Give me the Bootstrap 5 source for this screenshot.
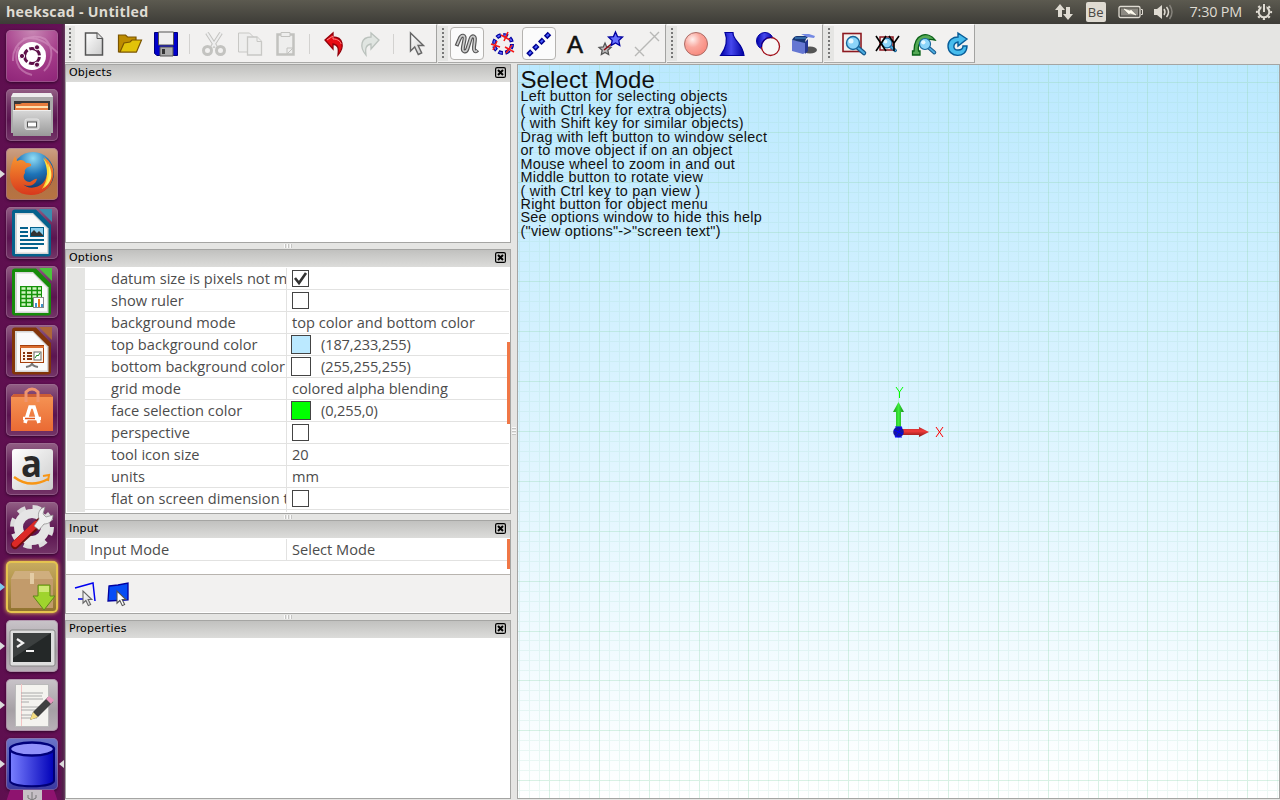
<!DOCTYPE html>
<html lang="en">
<head>
<meta charset="utf-8">
<title>heekscad - Untitled</title>
<link href="https://cdn.jsdelivr.net/npm/bootstrap@5.3.0/dist/css/bootstrap.min.css" rel="stylesheet">
<style>
body{width:1280px;height:800px;overflow:hidden;background:#e5e5e3;font-family:"Open Sans","Noto Sans",sans-serif;font-size:14.6px;color:#4c4c4c;line-height:22px}
svg{display:block;flex:none}
.topbar{height:24px;background:linear-gradient(#5c5a50,#3d3c37);color:#dfdbd2;line-height:24px}
.app-title{font-weight:700;font-size:14.2px;letter-spacing:.28px;padding-left:6px}
.clock{font-size:14.4px;letter-spacing:-.2px}
.kbd-ind{width:20px;height:20px;background:#dfdbd2;color:#4a4843;border-radius:2px;font-size:13px;line-height:20px}
.launcher{width:65px;height:776px;background:linear-gradient(90deg,#5e0f4f,#651056 92%,#4f2147 97%,#6c3c64);padding:6px 0 0 6px;gap:7px;overflow:hidden}
.tile{width:52px;height:52px;border-radius:5px;background:linear-gradient(#936085,#6b2a60 35%,#5b1450 60%,#743568);box-shadow:inset 0 0 0 1px #a3759988,0 1px 3px #30062a;flex:none;position:relative}
.tile.ub{background:radial-gradient(circle at 50% 0,#c988b5,#a43b89 55%,#8e2478)}
.tile.ff{background:linear-gradient(#cda184,#b07046 60%,#b77442)}
.tile.pk{background:linear-gradient(#c9ad61,#8f712e);box-shadow:inset 0 0 0 2px #e5c34f,0 0 4px #f5cc50}
.tile.gr{background:linear-gradient(#c9c4c9,#a6a0a5 60%,#b9b1b8)}
.tile.bl{background:linear-gradient(#6a74c9,#3b3aa0)}
.tile svg{width:52px;height:52px}
.run:before,.act:after{content:"";position:absolute;top:22px;border:4px solid transparent}
.run:before{left:-6px;border-left:5px solid #dcdcdc;border-right:0}
.run.pk:before{border-left-color:#7fc9ee}
.act:after{right:-6px;border-right:5px solid #dcdcdc;border-left:0}
.toolrow{height:40px}
.tb{height:39px;background:#f2f1f0;border-right:1px solid #a3a3a1;border-top:1px solid #fff;border-bottom:1px solid #a9a9a7;margin-right:1px}
.grip{width:10px;height:35px;background:#e5e5e3;margin-right:1px;flex:none}
.grip i{display:block;width:2px;height:31px;margin:2px 0 0 4px;background:repeating-linear-gradient(#777 0 2px,transparent 2px 4px)}
.cell{width:36px;height:34px;flex:none}
.tb4 .cell{width:35.5px}
.cell svg,.in-tools svg{width:24px;height:24px;overflow:visible}
.cell.on{background:#fbfbfb;border:1px solid #b5b3b0;border-radius:4px;width:34px;height:33px;margin:0 1px}
.vsep{width:12px;flex:none}.vsep i{display:block;width:1px;height:20px;background:#d3d2d0;margin-left:5px}
.side{width:446px;height:735px}
.dock{border:1px solid #a5a5a3;border-top:0;background:#fff;overflow:hidden;flex:none}
.dock-h{height:18px;background:linear-gradient(#c1c1bf,#dcdcda);border-top:1px solid #a5a5a3;font:11px/14px "DejaVu Sans",sans-serif;color:#000;padding:0 0 2px 3px;letter-spacing:.2px}
.dock-h svg{width:11px;height:11px;margin-right:4px}
.sash{height:7px;flex:none}
.sash i{display:block;width:9px;height:4px;background:repeating-linear-gradient(90deg,#fafafa 0 1px,#c5c5c3 1px 2px,#e5e5e3 2px 3px)}
.props{position:relative;overflow:hidden;padding:1px 1px 0 1px;background:#fff}
.prow{height:22px;flex:none;line-height:20px}
.gut{width:18px;background:#e5e5e3}
.lab{width:202px;border-right:1px solid #e2e2e1;border-bottom:1px solid #e2e2e1;padding-left:26px;overflow:hidden;white-space:nowrap;letter-spacing:.03px}
.val{border-bottom:1px solid #e2e2e1;padding-left:5px;white-space:nowrap}
.val>span{padding-bottom:1px}
.chk{width:17px;height:17px;border:1px solid #444;background:#fff}
.sw{width:20px;height:19px;border:1px solid #444;margin:0 10px 0 -1px}
.rgb{letter-spacing:-.13px}
.bar-pos{position:absolute;right:0;width:3px;background:#f07746}
.in-tools{height:38px;background:#f2f1f0;border-top:1px solid #b8b4af}
.vsash{width:6px;padding-top:363px}
.vsash i{display:block;width:4px;height:9px;margin-left:1px;background:repeating-linear-gradient(#fafafa 0 1px,#c5c5c3 1px 2px,#e5e5e3 2px 3px)}
.view{width:763px;height:735px;border:1px solid #a5a5a3;background:linear-gradient(#bbe9ff,#fff);position:relative;overflow:hidden}
.view>svg{position:absolute;left:0;top:0}
.help{position:absolute;left:2.5px;top:4px;color:#111;font:14.4px/13.45px "Liberation Sans",Arial,sans-serif;letter-spacing:.24px;white-space:nowrap}
.help b{display:block;font-weight:400;font-size:24px;line-height:21.4px;letter-spacing:.1px}
</style>
</head>
<body>
<svg width="0" height="0" class="position-absolute"><defs>
<linearGradient id="gw" x2="1" y2="1"><stop stop-color="#fff"/><stop offset="1" stop-color="#ccc"/></linearGradient>
<linearGradient id="gb" x2="1"><stop stop-color="#7a80ff"/><stop offset="1" stop-color="#0000b8"/></linearGradient>
<linearGradient id="gblue" x2="1"><stop stop-color="#0000a8"/><stop offset=".45" stop-color="#4648ee"/><stop offset="1" stop-color="#0000a0"/></linearGradient>
<linearGradient id="go" y2="1" x2="0"><stop stop-color="#f59555"/><stop offset="1" stop-color="#ea6a34"/></linearGradient>
<radialGradient id="gs" cx=".35" cy=".3" r=".7"><stop stop-color="#fff0ee"/><stop offset=".5" stop-color="#faa79d"/><stop offset="1" stop-color="#f88c80"/></radialGradient>
<radialGradient id="gg" cx=".5" cy=".15" r=".85"><stop stop-color="#8fdcf5"/><stop offset=".45" stop-color="#1e74b8"/><stop offset="1" stop-color="#0b2555"/></radialGradient>
<linearGradient id="gf" y2="1" x2="0"><stop stop-color="#f79530"/><stop offset="1" stop-color="#d8381c"/></linearGradient>
<linearGradient id="gm" y2="1" x2="0"><stop stop-color="#d8d8d8"/><stop offset="1" stop-color="#999"/></linearGradient>
<g id="lens"><path d="M4 4l7 6" stroke="#16588a" stroke-width="4.5" stroke-linecap="round"/><path d="M4 4l7 6" stroke="#4cabdf" stroke-width="2.2" stroke-linecap="round"/><circle r="6.5" fill="#8cd5fa" stroke="#18679c" stroke-width="1.4"/><circle cx="-2" cy="-2" r="2.5" fill="#e5f7ff"/></g>
<path id="star" d="M0-7l2 4.600 5 .5-3.700 3.300 1 5L0 4l-4.300 2.400 1-5L-7-1.900l5-.5z"/>
<path id="ptr" d="M0 0v18l4.200-4 3.600 7.500 3.400-1.600-3.600-7.400H13z"/>
<g id="close"><rect x=".6" y=".6" width="9.800" height="9.800" rx="1.500" fill="none" stroke="#000" stroke-width="1.200"/><path d="M3 3l5 5M8 3l-5 5" stroke="#000" stroke-width="2"/></g>
<path id="doc" d="M9 2.500h21L45 18v28.500q0 3-3 3H9q-3 0-3-3V5.500q0-3 3-3z"/>
<g id="sheet"><path d="M9 6h18l15.500 15.500V47H9z" fill="#d5d5d5"/><path d="M11 7.500h16L41 22v23.500H11z" fill="#fafafa"/></g>
</defs></svg>

<header class="topbar d-flex align-items-center justify-content-between">
 <div class="app-title">heekscad - Untitled</div>
 <div class="d-flex align-items-center" style="padding-right:7px">
  <svg width="18" height="18" style="margin-right:13px" fill="#dfdbd2"><path d="M5 1l5 6H7v7H3V7H0zM13 17l5-6h-3V4h-4v7H8z"/></svg>
  <div class="kbd-ind text-center" style="margin-right:12px">Be</div>
  <svg width="26" height="14" style="margin-right:10px"><rect x="1" y="1.500" width="21" height="11" rx="1.500" fill="none" stroke="#dfdbd2" stroke-width="1.300"/><rect x="3" y="3.500" width="17" height="7" fill="#8d8a82"/><path d="M23 4.500h1.500v5H23" stroke="#dfdbd2" fill="none"/><path d="M6 4l6 2 1-1 5 5-6-2-1 1z" fill="#fffbee" stroke="#fffbee" stroke-width=".6"/></svg>
  <svg width="20" height="18" style="margin-right:16px" fill="none"><path d="M0 6h3l5-4v14l-5-4H0z" fill="#dfdbd2"/><path d="M10 6q2 3 0 6M12.500 4q4 5 0 10" stroke="#dfdbd2" stroke-width="1.500"/><path d="M15.500 2q5 7 0 14" stroke="#85827b" stroke-width="1.500"/></svg>
  <div class="clock" style="margin-right:13px">7:30 PM</div>
  <svg width="18" height="18" viewBox="-9 -9 18 18" fill="none" stroke="#dfdbd2"><circle r="5.300" stroke-width="2"/><circle r="7.100" stroke-width="2" stroke-dasharray="2.200 3.376" stroke-dashoffset="1.100"/><path d="M0-9V-2" stroke="#504e46" stroke-width="5"/><path d="M0-8V0" stroke-width="2"/></svg>
 </div>
</header>

<div class="d-flex">
<nav class="launcher d-flex flex-column">
 <div class="tile ub"><svg><path d="M7 31C6 11 26 2 39 9c10 9 7 25-1 32M26 45C9 41 8 26 13 17M17 9c18-5 31 11 35 14" fill="none" stroke="#dba0ca" stroke-opacity=".5" stroke-width="2"/><circle cx="26" cy="26" r="14" fill="#fff"/><circle cx="26" cy="26" r="7.500" fill="none" stroke="#5e1049" stroke-width="3" stroke-dasharray="13.700 2" stroke-dashoffset="-1"/><g fill="#5e1049" stroke="#fff"><circle cx="16" cy="26" r="2.600"/><circle cx="31" cy="17.300" r="2.600"/><circle cx="31" cy="34.700" r="2.600"/></g></svg></div>
 <div class="tile"><svg><path d="M5 8l2-4h38l2 4v36H5z" fill="#aaa"/><path d="M5 8l2-4h38l2 4z" fill="#eee"/><rect x="8" y="12" width="36" height="10" fill="#383838"/><path d="M9 15h5l2-1h26v8H9z" fill="#e87c3c"/><path d="M10 18h32" stroke="#ffe1b0" stroke-width="2"/><path d="M7 21h38v26H7z" fill="url(#gm)"/><path d="M7 21.500h38" stroke="#eee"/><rect x="19" y="30" width="14" height="10.500" rx="2" fill="#cdcdcd" stroke="#e6e6e6"/><rect x="21.500" y="33" width="9" height="5" fill="#fff" stroke="#555"/></svg></div>
 <div class="tile ff run"><svg><circle cx="27" cy="25" r="21" fill="url(#gg)"/><path d="M38 9c7 5 11 12 9 20-2 12-12 18-22 18C11 47 4 38 4 27c0-7 2-13 5-19l2 5c4-2 7-1 9 2 3 0 6 0 5 3-4 1-7 3-6 7-3 3-1 9 5 9 3-1 5-4 7-3-2 8-11 8-14 5 4 5 14 5 20-1 6-7 5-16 1-26z" fill="url(#gf)"/><path d="M37 10c11 11 8 25-1 31 6-9 7-20 1-31z" fill="#ffdd35"/><path d="M42 15c7 14 2 20-4 25 5-8 6-15 4-25z" fill="#fff36a"/></svg></div>
 <div class="tile"><svg><use href="#doc" fill="#04618c"/><use href="#sheet"/><path d="M33 2h13v13z" fill="#3b8cae"/><g stroke="#04618c" stroke-width="2"><path d="M14 21h8M14 25h8M14 29h8M14 33h24M14 37h24M14 41h18"/></g><rect x="24.500" y="20.500" width="13" height="9" fill="#8ccfed" stroke="#04618c"/><path d="M25 29v-3l3-3 3 3 2-2 4 4v1z" fill="#333"/></svg></div>
 <div class="tile"><svg><use href="#doc" fill="#168b0a"/><use href="#sheet"/><path d="M33 2h13v13z" fill="#4bc43c"/><rect x="14" y="20" width="22" height="21" fill="#16930a"/><path d="M15.500 22.500h4m1.500 0h4m1.500 0h4m1.500 0h3M15.500 26.500h4m1.500 0h4m1.500 0h4m1.500 0h3M15.500 30.500h4m1.500 0h4m1.500 0h4m1.500 0h3M15.500 34.500h4m1.500 0h4M15.500 38.500h4m1.500 0h4" stroke="#cef5bf" stroke-width="2.400"/><rect x="27.500" y="31.500" width="10" height="10" fill="#fff" stroke="#888"/><path d="M29 37h2v4h-2zM35 38h2v3h-2z" fill="#4093ca"/><path d="M32 33h2v8h-2z" fill="#e97619"/></svg></div>
 <div class="tile"><svg><use href="#doc" fill="#823509"/><use href="#sheet"/><path d="M33 2h13v13z" fill="#ad6639"/><rect x="14.500" y="20.500" width="23" height="17" fill="#fff4e9" stroke="#a5400c"/><path d="M14 22h24" stroke="#d96c2d" stroke-width="2"/><path d="M17 28h2m2 0h5M17 31h2m2 0h5M17 34h2m2 0h5" stroke="#87330a" stroke-width="2"/><rect x="28" y="27" width="7" height="8" fill="#fff" stroke="#666"/><path d="M29 33l2-3 1 1 2-3" stroke="#198a25" fill="none"/><path d="M20 42q6-1 6-4 0 3 6 4" stroke="#777" stroke-width="2" fill="none"/></svg></div>
 <div class="tile"><svg><path d="M5 13l3-3h36l3 3v34H5z" fill="url(#go)"/><path d="M5 13l3-3h36l3 3z" fill="#cc5d35"/><path d="M20 18V8q6-6 12 0v10" stroke="#ef9570" stroke-width="3" fill="none"/><path d="M19 39l5-16h4l5 16M17 34.500h18" stroke="#fff" stroke-width="3.600" fill="none"/><path d="M19 34.500h10" stroke="#e2571c" stroke-width="1.500"/></svg></div>
 <div class="tile"><svg><rect x="6" y="6" width="41" height="41" rx="3" fill="url(#gw)"/><text x="15" y="34" style="font:bold 38px 'Open Sans',sans-serif" textLength="21" lengthAdjust="spacingAndGlyphs" fill="#292929">a</text><path d="M8 34q16 12 34 2" fill="none" stroke="#f79515" stroke-width="2.500"/><path d="M37 33l6-1-1 6" fill="none" stroke="#f79515" stroke-width="2"/></svg></div>
 <div class="tile"><svg><circle cx="26" cy="25" r="19" fill="none" stroke="#ddd" stroke-width="6" stroke-dasharray="8 6.920"/><circle cx="26" cy="25" r="13.500" fill="none" stroke="#e5e5e5" stroke-width="9"/><path d="M9 43L36 18" stroke="#6f0d0d" stroke-width="8" stroke-linecap="round"/><path d="M9 42L30 22" stroke="#dd2926" stroke-width="6" stroke-linecap="round"/><path d="M28 24l5-7c-2-6 1-11 6-12l-2 7 3 3 7-2c0 6-4 9-9 9l-5 6z" fill="#efefef" stroke="#888" stroke-width=".7"/></svg></div>
 <div class="tile pk run"><svg><path d="M9 10h34l4 8v29H5V18z" fill="#c29b6b"/><path d="M9 10h34l4 8H5z" fill="#cfae7e"/><path d="M24 12h4v11h-4z" fill="#e3cca5"/><path d="M32 24h12v11h5L38 49 27 35h5z" fill="#9fd42d" stroke="#60861a"/><path d="M33 25h10v6H33z" fill="#cee874"/></svg></div>
 <div class="tile gr run"><svg><rect x="4" y="10" width="45" height="36" rx="2" fill="#dedede" stroke="#888"/><rect x="7" y="13" width="38" height="29" fill="#242828"/><path d="M7 13h38L7 38z" fill="#3c4040"/><path d="M11 19l6 4-6 4M20 31h8" stroke="#f3f3f3" stroke-width="2.200" fill="none"/></svg></div>
 <div class="tile gr run"><svg><rect x="9.500" y="5.500" width="33" height="42" fill="#f4f3ef" stroke="#bbb"/><path d="M15.500 5v42" stroke="#f3c4c4"/><path d="M15 14h22M15 17h21M15 20h22M15 23h8M15 28h19M15 31h18M15 36h13M15 39h16" stroke="#aaa"/><path d="M24 41l3-8L42 18l5 5-15 15z" fill="#404141"/><path d="M24 41l3-8 5 5z" fill="#f4dd82"/><path d="M40 20l3-3 5 4-3 4z" fill="#e897be"/></svg></div>
 <div class="tile bl run act"><svg><path d="M4 11v32c2 7 42 7 44 0V11z" fill="url(#gb)" stroke="#000075" stroke-width="2"/><ellipse cx="26" cy="11" rx="22" ry="6.500" fill="#9091fa" stroke="#00007b" stroke-width="2.500"/></svg></div>
 <div class="tile" style="margin-top:-7px;z-index:1;background:none;box-shadow:none"><svg><path d="M4 0h44l4 12H0z" fill="#8e136f"/><path d="M17 0h19v12H17z" fill="#c6bfc5"/><path d="M26 2v10M22 5v3l4 2 4-2V5" stroke="#777" fill="none"/></svg></div>
</nav>

<main>
<div class="toolrow d-flex">
 <div class="tb d-flex align-items-center" style="width:372px">
  <div class="grip"><i></i></div>
  <div class="cell d-flex align-items-center justify-content-center"><svg><path d="M3.500 1H15l5.500 5.500V23h-17z" fill="url(#gw)" stroke="#555" stroke-width="1.500"/><path d="M15 1v5.500h5.500" fill="#ddd" stroke="#555"/></svg></div>
  <div class="cell d-flex align-items-center justify-content-center"><svg stroke="#7b5500" stroke-width="1.200"><path d="M.5 3h7l2 2H18v15H.5z" fill="#bd8c00"/><path d="M2 20l4-9 6-1 2-2h9.500l-5 12z" fill="#e2c30a"/></svg></div>
  <div class="cell d-flex align-items-center justify-content-center"><svg><path d="M.5.5h23v23H3l-2.500-2z" fill="#0000cb" stroke="#00007c"/><path d="M4.500 0h15v13h-15z" fill="#f0f0f0" stroke="#555"/><path d="M6 15h13v9H6z" fill="#aaa" stroke="#555"/><path d="M8 17h3v5H8z" fill="#333"/></svg></div>
  <div class="vsep"><i></i></div>
  <div class="cell d-flex align-items-center justify-content-center"><svg fill="none" stroke="#c3c3c0"><path d="M5 1l9 14M19 1l-9 14" stroke-width="4"/><path d="M5 1l9 14M19 1l-9 14" stroke="#eee" stroke-width="2"/><circle cx="5.500" cy="18.500" r="4" stroke-width="3"/><circle cx="18.500" cy="18.500" r="4" stroke-width="3"/></svg></div>
  <div class="cell d-flex align-items-center justify-content-center"><svg fill="#eeeeed" stroke="#c8c8c5"><path d="M.5 1h11l4 4v15H.5z"/><path d="M9.500 5H19l4.500 4.500V23h-14z" stroke-width="1.300"/><path d="M19 5v4.500h4.500"/></svg></div>
  <div class="cell d-flex align-items-center justify-content-center"><svg fill="#eeeeed" stroke="#c2c2bf"><path d="M3.500 2.500h16v20h-16z" stroke-width="2.500"/><path d="M7 .5h9v4H7z"/><path d="M13 22v-6h6z"/></svg></div>
  <div class="vsep"><i></i></div>
  <div class="cell d-flex align-items-center justify-content-center"><svg><path d="M3 8l8-7v4c10 0 12 10 5 18 1-7 0-10-5-11v5z" fill="#e90b13" stroke="#92000a" stroke-width="1.300"/><path d="M5 8l6-4v3c5 0 8 3 8 5" stroke="#ff8585" fill="none"/></svg></div>
  <div class="cell d-flex align-items-center justify-content-center"><svg><path d="M21 8l-8-7v4C3 5 1 15 8 23c-1-7 0-10 5-11v5z" fill="#e0e5e1" stroke="#bbc2bd" stroke-width="1.300"/></svg></div>
  <div class="vsep" style="width:11px"><i></i></div>
  <div class="cell d-flex align-items-center justify-content-center"><svg><use href="#ptr" x="5.500" y="1" fill="url(#gw)" stroke="#666" stroke-width="1.400"/></svg></div>
 </div>
 <div class="tb d-flex align-items-center" style="width:228px">
  <div class="grip"><i></i></div>
  <div class="cell on d-flex align-items-center justify-content-center"><svg fill="none"><path d="M1.500 14L4.500 7C6.500 2 10.500 3 9.500 7.500L8 15c-1 5 3 6 4.500 1.500L15.500 7c1.500-4.500 5-3 4.300 1.500L19 15c-.5 4 1.500 5.500 3.500 3" stroke="#555" stroke-width="4"/><path d="M2 13L4.500 7C6.500 2 10.500 3 9.500 7.500L8 15c-1 5 3 6 4.500 1.500L15.500 7c1.500-4.500 5-3 4.300 1.500L19 15c-.5 4 1.500 5.500 3 3.500" stroke="#ccc" stroke-width="1.700"/></svg></div>
  <div class="cell d-flex align-items-center justify-content-center"><svg fill="none"><circle cx="12" cy="12" r="9" stroke="#0000a0" stroke-width="4" stroke-dasharray="4.600 2.470"/><circle cx="12" cy="12" r="9" stroke="#5d68ff" stroke-width="1.600" stroke-dasharray="2.600 4.470" stroke-dashoffset="-1"/><path d="M10 3l9 5M17 0l-4 9M0 12l9 3M6 9l-4 9M14 15l9 5M21 13l-6 8" stroke="#f41a19" stroke-width="1.600"/></svg></div>
  <div class="cell on d-flex align-items-center justify-content-center"><svg><path d="M1 23L23 1" stroke="#00008e" stroke-width="5" stroke-dasharray="5.500 2.800"/><path d="M2 22L23 1" stroke="#4960ff" stroke-width="2" stroke-dasharray="3 5.300"/></svg></div>
  <div class="cell d-flex align-items-center justify-content-center"><svg><text x="4" y="21" textLength="16" lengthAdjust="spacingAndGlyphs" style="font:24px 'Liberation Sans',sans-serif" fill="#111" stroke="#111" stroke-width=".6">A</text></svg></div>
  <div class="cell d-flex align-items-center justify-content-center"><svg><use href="#star" transform="translate(6 17) scale(.85)" fill="#bbb" stroke="#555" stroke-width="1.500"/><path d="M5 18L16 9" stroke="#8b0912" stroke-width="1.600"/><use href="#star" x="16.500" y="7" fill="#6871ff" stroke="#0000a0" stroke-width="1.300"/></svg></div>
  <div class="cell d-flex align-items-center justify-content-center"><svg stroke="#b8b8b6" stroke-width="1.400"><path d="M4 20L20 4M0 15l9 9M0 24l9-9M15 0l9 9M15 9l9-9"/></svg></div>
 </div>
 <div class="tb d-flex align-items-center" style="width:156px">
  <div class="grip"><i></i></div>
  <div class="cell d-flex align-items-center justify-content-center"><svg><circle cx="12" cy="12" r="11.500" fill="url(#gs)" stroke="#ad6d67"/></svg></div>
  <div class="cell d-flex align-items-center justify-content-center"><svg><path d="M5 .5h8c0 9 9 9 11 23H.5C6 16 8 8 5 .5z" fill="url(#gblue)" stroke="#00009c" stroke-width="1.200"/></svg></div>
  <div class="cell d-flex align-items-center justify-content-center"><svg><circle cx="9" cy="9" r="8.500" fill="url(#gblue)" stroke="#0000a0"/><circle cx="14.500" cy="14.500" r="9" fill="#f7f6f6" stroke="#a00d17" stroke-width="1.300"/><path d="M5.500 15a9 9 0 0 1 10-9.500" stroke="#0000a0" fill="none" stroke-width="1.300"/></svg></div>
  <div class="cell d-flex align-items-center justify-content-center"><svg><ellipse cx="18" cy="18" rx="7" ry="3.500" fill="#555"/><path d="M0 8l13 2v11l-2 1-11-3z" fill="#6577d2"/><path d="M13 10l3-3v12l-3 3z" fill="#273793"/><path d="M0 8q2-4 5-4h14q-6 1-6 7z" fill="#183674"/><path d="M3 6h11" stroke="#4d9ad6"/><path d="M9 2h8l6 2-1 2-7-1z" fill="#7489e4"/></svg></div>
 </div>
 <div class="tb tb4 d-flex align-items-center" style="width:151px">
  <div class="grip"><i></i></div>
  <div class="cell d-flex align-items-center justify-content-center"><svg><rect x="2" y="1.500" width="18" height="18" fill="none" stroke="#8d1920" stroke-width="1.600"/><use href="#lens" x="12" y="11"/></svg></div>
  <div class="cell d-flex align-items-center justify-content-center"><svg style="margin-left:-2px"><rect x="5" y="5" width="13" height="13" fill="none" stroke="#8d1920" stroke-width="1.500"/><use href="#lens" transform="translate(12 11) scale(.75)"/><path d="M1 4l10 15M11 4L1 19M14 4l5 7 5-7M19 11v8" stroke="#000" stroke-width="1.600" fill="none"/></svg></div>
  <div class="cell d-flex align-items-center justify-content-center"><svg><path d="M.5 23h7.500v-4H6.500C5 10 12 6 23 8 16-1 2 1 2 19H.5z" fill="#55a955" stroke="#096117" stroke-width="1.300"/><use href="#lens" transform="translate(13 12) scale(.85)"/></svg></div>
  <div class="cell d-flex align-items-center justify-content-center"><svg><path d="M11 1l9 6-9 7v-4c-5 1-6 8 0 8 4 0 5-2 5-4h4c0 13-19 12-19 0C1 8 6 5 11 5z" fill="#47bced" stroke="#075c98" stroke-width="1.400"/></svg></div>
 </div>
</div>

<div class="d-flex">
<aside class="side d-flex flex-column">
 <section class="dock" style="height:179px"><div class="dock-h d-flex align-items-center justify-content-between"><span>Objects</span><svg><use href="#close"/></svg></div></section>
 <div class="sash d-flex justify-content-center align-items-center" style="height:6px"><i></i></div>
 <section class="dock" style="height:265px"><div class="dock-h d-flex align-items-center justify-content-between"><span>Options</span><svg><use href="#close"/></svg></div>
  <div class="props" id="options" style="height:245px"><div class="bar-pos" style="top:75px;height:82px"></div></div></section>
 <div class="sash d-flex justify-content-center align-items-center" style="height:6px"><i></i></div>
 <section class="dock" style="height:94px"><div class="dock-h d-flex align-items-center justify-content-between"><span>Input</span><svg><use href="#close"/></svg></div>
  <div class="props" style="height:36px"><div class="prow d-flex"><div class="gut"></div><div class="lab" style="padding-left:5px">Input Mode</div><div class="val flex-fill">Select Mode</div></div><div class="bar-pos" style="top:1px;height:30px"></div></div>
  <div class="in-tools d-flex align-items-center ps-2" style="gap:9px">
   <svg><path d="M1 6l18-5 2 18M4 17h8" fill="none" stroke="#0000f0" stroke-width="1.500"/><use href="#ptr" transform="translate(9 9) scale(.68)" fill="url(#gw)" stroke="#666" stroke-width="1.600"/></svg>
   <svg><path d="M2 4l9-1 10-2v17L1 19z" fill="#074df5" stroke="#0000a0" stroke-width="1.300"/><use href="#ptr" transform="translate(10 9) scale(.68)" fill="#fff" stroke="#555" stroke-width="1.600"/></svg>
  </div></section>
 <div class="sash d-flex justify-content-center align-items-center" style="height:6px"><i></i></div>
 <section class="dock" style="height:179px"><div class="dock-h d-flex align-items-center justify-content-between"><span>Properties</span><svg><use href="#close"/></svg></div></section>
</aside>
<div class="vsash"><i></i></div>
<section class="view">
 <svg width="761" height="734" id="grid" shape-rendering="crispEdges"></svg>
 <svg width="761" height="734" viewBox="518 65 761 734">
  <defs><linearGradient id="ax" x2="0" y2="1"><stop stop-color="#b92929"/><stop offset=".4" stop-color="#f23b3b"/><stop offset="1" stop-color="#851515"/></linearGradient><linearGradient id="ay"><stop stop-color="#169716"/><stop offset=".5" stop-color="#3bed3b"/><stop offset="1" stop-color="#158b15"/></linearGradient></defs>
  <path d="M898 429h21v-2l10 5-10 5v-2h-21z" fill="url(#ax)"/><path d="M896 432v-20h-3l5.500-10 5.500 10H901v20z" fill="url(#ay)"/><circle cx="898.500" cy="432" r="5.300" fill="#1515a0"/><path d="M895 427h7l-7 10h7M894 430l9 4" stroke="#0000ff" fill="none"/>
  <path d="M936 427l7 10M943 427l-7 10" stroke="#f00" stroke-width="1"/><path d="M896 387l3.500 5 3.500-5M899.500 392v6" stroke="#0f0" stroke-width="1" fill="none"/>
 </svg>
 <div class="help"><b>Select Mode</b>Left button for selecting objects<br>( with Ctrl key for extra objects)<br>( with Shift key for similar objects)<br>Drag with left button to window select<br>or to move object if on an object<br>Mouse wheel to zoom in and out<br>Middle button to rotate view<br>( with Ctrl key to pan view )<br>Right button for object menu<br>See options window to hide this help<br>("view options"-&gt;"screen text")</div>
</section>
</div>
</main>
</div>
<script src="https://cdn.jsdelivr.net/npm/bootstrap@5.3.0/dist/js/bootstrap.bundle.min.js"></script>
<script>
const box='<div class="chk"></div>',
 ticked='<div class="chk"><svg width="15" height="15"><path d="M2 7l4 5 7-10" fill="none" stroke="#333" stroke-width="2.600"/></svg></div>',
 word=t=>`<span>${t}</span>`,
 color=c=>`<div class="sw" style="background:rgb(${c})"></div><span class="rgb">(${c})</span>`;
const rows=[['datum size is pixels not mm',ticked],['show ruler',box],['background mode',word('top color and bottom color')],
 ['top background color',color('187,233,255')],['bottom background color',color('255,255,255')],['grid mode',word('colored alpha blending')],
 ['face selection color',color('0,255,0')],['perspective',box],['tool icon size',word('20')],['units',word('mm')],['flat on screen dimension text',box],['','']];
document.getElementById('options').insertAdjacentHTML('afterbegin',rows.map(([k,v])=>
 `<div class="prow d-flex"><div class="gut"></div><div class="lab">${k}</div><div class="val flex-fill d-flex align-items-center">${v}</div></div>`).join(''));
// Grid lines radiate from the origin; every fifth line is a major one.
const cx=380,cy=367,step=9.975;
let minor='',major='';
for(let i=-40;i<=40;i++){
 const x=Math.round(cx+i*step)+.5,y=Math.round(cy+i*step)-.5;
 const d=(x>0&&x<761?`M${x} 0V734`:'')+(y>0&&y<734?`M0 ${y}H761`:'');
 if(i%5)minor+=d;else major+=d;
}
document.getElementById('grid').innerHTML=`<path d="${minor}" stroke="#a0dcc8" stroke-opacity=".2"/><path d="${major}" stroke="#96d7b4" stroke-opacity=".36"/>`;
</script>
</body>
</html>
